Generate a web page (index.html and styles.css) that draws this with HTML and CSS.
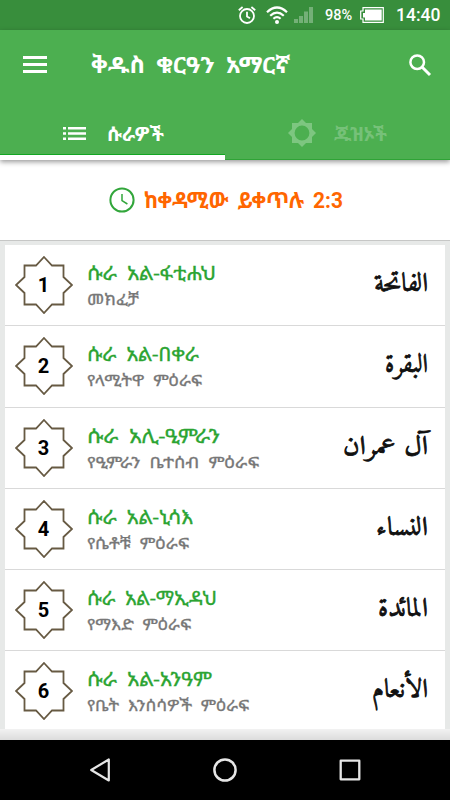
FILE: index.html
```html
<!DOCTYPE html>
<html lang="am">
<head>
  <meta charset="UTF-8">
  <title>ቅዱስ ቁርዓን አማርኛ</title>
  <link rel="stylesheet" href="styles.css">
</head>
<body>
  <svg class="defs" width="0" height="0">
    <symbol id="star" viewBox="0 0 58 58">
      <path d="M29 1 L37 9.5 H48.5 V21 L57 29 L48.5 37 V48.5 H37 L29 57 L21 48.5 H9.5 V37 L1 29 L9.5 21 V9.5 H21 Z" fill="none" stroke="#675a43" stroke-width="1.8"/>
    </symbol>
  </svg>

  <div class="status-bar">
    <svg class="alarm" width="18" height="18" viewBox="0 0 18 18" fill="none" stroke="#fff" stroke-width="1.8">
      <circle cx="9" cy="10" r="7"/>
      <path d="M.8 4.2 4.6 1M17.2 4.2 13.4 1M9 5.8V10.5L12 12.3"/>
    </svg>
    <svg class="wifi" width="22" height="18" viewBox="0 0 22 18" fill="none" stroke="#fff" stroke-width="2.2">
      <path d="M1 6.2Q11-3.2 21 6.2M4.2 9.7Q11 3.4 17.8 9.7M7.4 12.8Q11 9.6 14.6 12.8"/>
      <circle cx="11" cy="16" r="2" fill="#fff" stroke="none"/>
    </svg>
    <svg class="signal" width="19" height="16" viewBox="0 0 19 16" fill="#74b077">
      <path d="M0 12h4v4H0zM5 9h4v7H5zM10 4.500h4v11.500h-4zM15 0h4v16h-4z"/>
    </svg>
    <span class="percent">98%</span>
    <svg class="battery" width="24" height="16" viewBox="0 0 24 16">
      <path d="M3 .7H23.3V15.3H3V12H.7V4H3Z" fill="none" stroke="#fff" stroke-width="1.2"/>
      <path d="M5 2.5H21.7V13.5H5V10.5H3V6H5Z" fill="#fff"/>
    </svg>
    <span class="time">14:40</span>
  </div>

  <header class="header">
    <div class="toolbar">
      <svg class="menu" width="24" height="18" viewBox="0 0 24 18" fill="#fff">
        <path d="M0 0h24v3H0zM0 7h24v3H0zM0 14h24v3H0z"/>
      </svg>
      <h1 class="title"><svg width="200" height="34"><text x="0" y="25" textLength="199" lengthAdjust="spacingAndGlyphs">ቅዱስ ቁርዓን አማርኛ</text></svg></h1>
      <svg class="search" width="22" height="22" viewBox="0 0 22 22" fill="none" stroke="#fff" stroke-width="2.5">
        <circle cx="8.2" cy="8.2" r="6.8"/>
        <path d="M13 13 21 21" stroke-width="3"/>
      </svg>
    </div>
    <nav class="tabs">
      <div class="tab active">
        <svg class="list-icon" width="23" height="13" viewBox="0 0 23 13" fill="#fff">
          <path d="M0 0h3v2.5H0zM5 0h18v2.5H5zM0 5.2h3v2.5H0zM5 5.2h18v2.5H5zM0 10.5h3V13H0zM5 10.5h18V13H5z"/>
        </svg>
        <svg class="tab-text" width="58" height="28"><text x="0" y="22" textLength="57" lengthAdjust="spacingAndGlyphs">ሱራዎች</text></svg>
      </div>
      <div class="tab">
        <svg class="juz-icon" width="28" height="28" viewBox="0 0 28 28">
          <path fill="#7dc680" fill-rule="evenodd" d="M14 0 18 4H24V10L28 14 24 18V24H18L14 28 10 24H4V18L0 14 4 10V4H10ZM14 6.6a7.4 7.4 0 1 0 0 14.8a7.4 7.4 0 1 0 0-14.8Z"/>
        </svg>
        <svg class="tab-text" width="54" height="28"><text x="0" y="22" textLength="53" lengthAdjust="spacingAndGlyphs">ጁዝኦች</text></svg>
      </div>
    </nav>
  </header>

  <div class="resume">
    <svg class="clock" width="26" height="26" viewBox="0 0 26 26" fill="none" stroke="#32a63b" stroke-width="2">
      <circle cx="13" cy="13" r="11.6"/>
      <path d="M13 7V13.6L18.4 17" stroke-width="1.5"/>
    </svg>
    <svg class="resume-text" width="206" height="40"><text x="0" y="28" textLength="199" lengthAdjust="spacingAndGlyphs">ከቀዳሚው ይቀጥሉ 2:3</text></svg>
  </div>

  <main class="list">
    <div class="sura">
      <div class="number"><svg><use href="#star"/></svg><span>1</span></div>
      <svg class="names" width="190" height="60"><text class="name" x="0" y="25" textLength="129" lengthAdjust="spacingAndGlyphs">ሱራ አል-ፋቲሐህ</text><text class="meaning" x="0" y="50" textLength="52" lengthAdjust="spacingAndGlyphs">መክፈቻ</text></svg>
      <svg class="arabic" width="110" height="76"><text x="105" y="44" textLength="54" lengthAdjust="spacingAndGlyphs">الفاتحة</text></svg>
    </div>
    <div class="sura">
      <div class="number"><svg><use href="#star"/></svg><span>2</span></div>
      <svg class="names" width="190" height="60"><text class="name" x="0" y="25" textLength="112" lengthAdjust="spacingAndGlyphs">ሱራ አል-በቀራ</text><text class="meaning" x="0" y="50" textLength="115" lengthAdjust="spacingAndGlyphs">የላሚትዋ ምዕራፍ</text></svg>
      <svg class="arabic" width="110" height="76"><text x="105" y="44" textLength="43" lengthAdjust="spacingAndGlyphs">البقرة</text></svg>
    </div>
    <div class="sura">
      <div class="number"><svg><use href="#star"/></svg><span>3</span></div>
      <svg class="names" width="190" height="60"><text class="name" x="0" y="25" textLength="133" lengthAdjust="spacingAndGlyphs">ሱራ አሊ-ዒምራን</text><text class="meaning" x="0" y="50" textLength="172" lengthAdjust="spacingAndGlyphs">የዒምራን ቤተሰብ ምዕራፍ</text></svg>
      <svg class="arabic" width="110" height="76"><text x="105" y="44" textLength="85" lengthAdjust="spacingAndGlyphs">آل عمران</text></svg>
    </div>
    <div class="sura">
      <div class="number"><svg><use href="#star"/></svg><span>4</span></div>
      <svg class="names" width="190" height="60"><text class="name" x="0" y="25" textLength="106" lengthAdjust="spacingAndGlyphs">ሱራ አል-ኒሳእ</text><text class="meaning" x="0" y="50" textLength="102" lengthAdjust="spacingAndGlyphs">የሴቶቹ ምዕራፍ</text></svg>
      <svg class="arabic" width="110" height="76"><text x="105" y="44" textLength="52" lengthAdjust="spacingAndGlyphs">النساء</text></svg>
    </div>
    <div class="sura">
      <div class="number"><svg><use href="#star"/></svg><span>5</span></div>
      <svg class="names" width="190" height="60"><text class="name" x="0" y="25" textLength="130" lengthAdjust="spacingAndGlyphs">ሱራ አል-ማኢዳህ</text><text class="meaning" x="0" y="50" textLength="104" lengthAdjust="spacingAndGlyphs">የማእድ ምዕራፍ</text></svg>
      <svg class="arabic" width="110" height="76"><text x="105" y="44" textLength="50" lengthAdjust="spacingAndGlyphs">المائدة</text></svg>
    </div>
    <div class="sura">
      <div class="number"><svg><use href="#star"/></svg><span>6</span></div>
      <svg class="names" width="190" height="60"><text class="name" x="0" y="25" textLength="125" lengthAdjust="spacingAndGlyphs">ሱራ አል-አንዓም</text><text class="meaning" x="0" y="50" textLength="162" lengthAdjust="spacingAndGlyphs">የቤት እንሰሳዎች ምዕራፍ</text></svg>
      <svg class="arabic" width="110" height="76"><text x="105" y="44" textLength="56" lengthAdjust="spacingAndGlyphs">الأنعام</text></svg>
    </div>
  </main>
  <div class="list-end"></div>

  <footer class="nav-bar">
    <svg width="20" height="24" viewBox="0 0 20 24" fill="none" stroke="#e6e6e6" stroke-width="2.2" stroke-linejoin="round"><path d="M1.2 12 18.8 1.5V22.5Z"/></svg>
    <svg width="24" height="24" viewBox="0 0 24 24" fill="none" stroke="#e6e6e6" stroke-width="2.5"><circle cx="12" cy="12" r="10.6"/></svg>
    <svg width="22" height="22" viewBox="0 0 22 22" fill="none" stroke="#e6e6e6" stroke-width="2.3" stroke-linejoin="round"><path d="M1.7 1.7H20.3V20.3H1.7Z"/></svg>
  </footer>
</body>
</html>
```
FILE: styles.css
```css
* {
  box-sizing: border-box;
}
body {
  margin: 0;
  width: 450px;
  height: 800px;
  overflow: hidden;
  display: flex;
  flex-direction: column;
  background: #e7e9e8;
  font-family: Roboto, "Noto Sans Ethiopic", "Noto Sans", "DejaVu Sans", sans-serif;
}
svg {
  display: block;
  flex: none;
  overflow: visible;
}
.defs {
  display: none;
}
.status-bar {
  height: 30px;
  flex: none;
  display: flex;
  align-items: center;
  background: #388e3c;
  color: #fff;
  padding-left: 238px;
}
.wifi {
  margin-left: 10px;
}
.signal {
  margin-left: 6px;
}
.percent {
  width: 29px;
  margin-left: 12px;
  font-size: 14.5px;
  font-weight: 500;
}
.battery {
  margin-left: 6px;
}
.time {
  margin-left: 12px;
  font-size: 17.5px;
  font-weight: 500;
  white-space: nowrap;
}
.header {
  height: 130px;
  flex: none;
  position: relative;
  background: #4caf50;
  box-shadow: 0 2px 5px rgba(0,0,0,0.4);
}
.toolbar {
  height: 70px;
  display: flex;
  align-items: center;
  padding: 0 19px 0 23px;
}
.title {
  margin: 0 auto 0 44px;
  font-size: 23px;
  word-spacing: 5px;
}
.title text {
  fill: #fff;
}
.tabs {
  height: 60px;
  display: flex;
  border-bottom: 1px solid #2fa336;
}
.tab {
  width: 225px;
  display: flex;
  align-items: center;
  padding: 6px 0 0 63px;
  font-size: 19px;
  font-weight: bold;
}
.tab text {
  fill: #76c179;
}
.tab.active {
  height: 60px;
  border-bottom: 5px solid #fff;
  box-shadow: inset 0 -1px #12a622;
  padding-top: 11px;
}
.tab.active text {
  fill: #fff;
}
.list-icon {
  margin-right: 21px;
}
.juz-icon {
  margin-right: 18px;
}
.resume {
  height: 81px;
  flex: none;
  display: flex;
  align-items: center;
  padding-left: 109px;
  background: #fff;
  border-bottom: 1px solid #c6c7c6;
}
.resume-text {
  margin-left: 9px;
  font-size: 22px;
  font-weight: bold;
  word-spacing: 4px;
}
.resume text {
  fill: #ff6600;
}
.list {
  height: 484px;
  flex: none;
  margin: 4px 5px 0;
  overflow: hidden;
  background: #fff;
}
.sura {
  height: 81.25px;
  display: flex;
  align-items: center;
  padding: 0 12px 0 9px;
  border-bottom: 1px solid #d9d9d9;
}
.number {
  display: grid;
  width: 59px;
  height: 58px;
  font-size: 20px;
  font-weight: bold;
  place-items: center;
}
.number svg,
.number span {
  grid-area: 1 / 1;
}
.number svg {
  width: 58px;
  height: 58px;
}
.names {
  margin: 0 auto 0 14px;
  word-spacing: 4px;
}
.name {
  font-size: 19px;
  fill: #2ba432;
  stroke: #2ba432;
  stroke-width: 0.3px;
}
.meaning {
  font-size: 16px;
  fill: #777;
  stroke: #777;
  stroke-width: 0.3px;
}
.arabic {
  direction: rtl;
  text-anchor: start;
  font-family: Amiri, "Noto Naskh Arabic", "DejaVu Sans", sans-serif;
  font-size: 26px;
  fill: #111;
  stroke: #111;
  stroke-width: 0.8px;
}
.list-end {
  height: 11px;
  flex: none;
  background: linear-gradient(#f2f2f2, #dcdcdc);
}
.nav-bar {
  height: 60px;
  flex: none;
  display: flex;
  align-items: center;
  justify-content: space-between;
  padding: 0 89px 0 90px;
  background: #000;
}
```
